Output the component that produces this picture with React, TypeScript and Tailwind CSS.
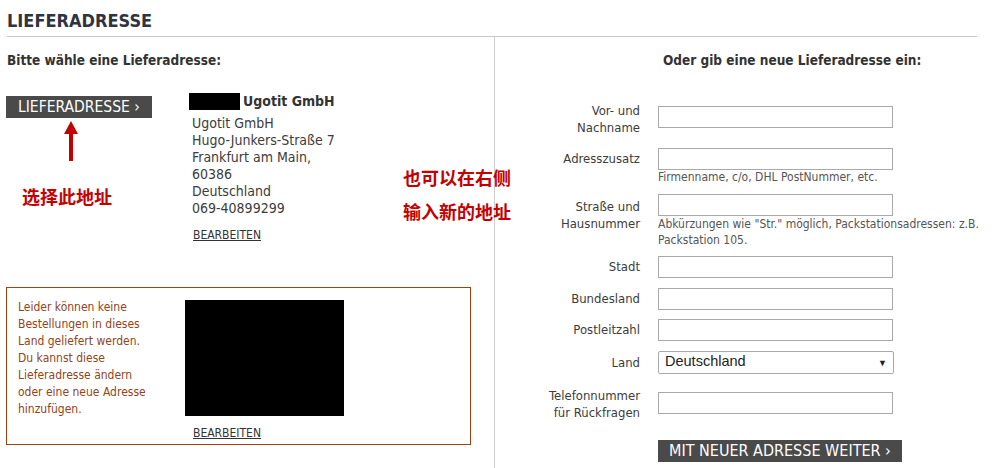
const font = "font-['DejaVu_Sans_Condensed','DejaVu_Sans',sans-serif]";
const cjk = "font-['Noto_Sans_CJK_SC',sans-serif]";

const Input = ({ top = 0 }: { top?: number }) => (
  <div className="h-[22px] w-[235px] border border-[#a9a9a9] bg-white" style={{ marginTop: top }} />
);

const Label = ({ children, className = "" }: { children: React.ReactNode; className?: string }) => (
  <div className={`w-[163px] shrink-0 pr-[18px] text-right ${className}`}>{children}</div>
);

const Arrow = () => (
  <svg width="16" height="40" viewBox="0 0 16 40" className="block">
    <path d="M8 0 L15 13 L10 13 L10 40 L6 40 L6 13 L1 13 Z" fill="#c40000" />
  </svg>
);

export default function App() {
  return (
    <div className={`${font} w-[997px] h-[468px] overflow-hidden bg-white text-[13px] text-[#3c3c3c]`}>
      <div className="w-[970px] ml-[7px]">
        {/* header */}
        <h1 className="pt-[11px] pb-[5px] text-[18px] leading-[20px] font-bold text-[#2f3540] border-b border-[#c8c8c8]">
          LIEFERADRESSE
        </h1>

        <div className="flex min-h-[440px]">
          {/* left column */}
          <div className="w-[488px] shrink-0 border-r border-[#cfcfcf]">
            <h2 className="pt-[15px] text-[13.5px] font-bold text-[#333] leading-[17px]">Bitte wähle eine Lieferadresse:</h2>

            <div className="flex h-[194px] mt-[24px]">
              <div className="w-[182px] shrink-0">
                <button className="mt-[3px] -ml-[1px] h-[22px] px-[12px] bg-[#4a4a4a] text-white text-[15.5px] leading-[22px]">
                  LIEFERADRESSE ›
                </button>
                <div className="ml-[56px] mt-[3px]">
                  <Arrow />
                </div>
                <div className={`${cjk} ml-[15px] mt-[23px] text-[18px] font-bold leading-[24px] text-[#c40000] whitespace-nowrap`}>选择此地址</div>
              </div>

              <div className="w-[214px] shrink-0 text-[14px] leading-[17px]">
                <div className="flex items-center">
                  <span className="inline-block w-[51px] h-[17px] bg-black" />
                  <span className="ml-[3px] font-bold text-[#333]">Ugotit GmbH</span>
                </div>
                <div className="ml-[3px] mt-[5px]">
                  <div>Ugotit GmbH</div>
                  <div>Hugo-Junkers-Straße 7</div>
                  <div>Frankfurt am Main,</div>
                  <div>60386</div>
                  <div>Deutschland</div>
                  <div>069-40899299</div>
                  <a className="block mt-[11px] ml-[1px] text-[12px] leading-[15px] underline text-[#333]">BEARBEITEN</a>
                </div>
              </div>

              <div className={`${cjk} relative z-10 mt-[67px] text-[18px] font-bold leading-[34px] text-[#c40000] whitespace-nowrap`}>
                <div>也可以在右侧</div>
                <div>输入新的地址</div>
              </div>
            </div>

            {/* error box */}
            <div className="-ml-[1px] w-[465px] h-[158px] border border-[#a3400c] flex pt-[11px] pl-[11px]">
              <p className="w-[167px] shrink-0 text-[12px] leading-[17px] text-[#93441a] pr-[30px]">
                Leider können keine Bestellungen in dieses Land geliefert werden. Du kannst diese Lieferadresse ändern oder eine neue Adresse hinzufügen.
              </p>
              <div className="pt-[1px]">
                <div className="w-[159px] h-[116px] bg-black" />
                <a className="inline-block mt-[8px] ml-[8px] text-[12px] underline text-[#333]">BEARBEITEN</a>
              </div>
            </div>
          </div>

          {/* right column */}
          <div className="flex-1">
            <h2 className="pt-[15px] pl-[168px] text-[13.5px] font-bold text-[#333] leading-[17px]">Oder gib eine neue Lieferadresse ein:</h2>

            <div className="mt-[33px] flex flex-col">
              <div className="flex items-start">
                <Label className="leading-[17px]">Vor- und<br />Nachname</Label>
                <Input top={4} />
              </div>

              <div className="mt-[12px] flex items-start">
                <Label className="leading-[22px]">Adresszusatz</Label>
                <div>
                  <Input />
                  <div className="text-[12px] leading-[15px] text-[#555]">Firmenname, c/o, DHL PostNummer, etc.</div>
                </div>
              </div>

              <div className="mt-[9px] flex items-start">
                <Label className="pt-[4px] leading-[17px]">Straße und<br />Hausnummer</Label>
                <div>
                  <Input />
                  <div className="w-[330px] text-[12px] leading-[16px] text-[#555]">
                    Abkürzungen wie "Str." möglich, Packstationsadressen: z.B. Packstation 105.
                  </div>
                </div>
              </div>

              <div className="mt-[8px] flex flex-col gap-[9.5px]">
                {["Stadt", "Bundesland", "Postleitzahl"].map((l) => (
                  <div key={l} className="flex items-center">
                    <Label className="leading-[22px]">{l}</Label>
                    <Input />
                  </div>
                ))}
                <div className="flex items-center">
                  <Label className="leading-[23px]">Land</Label>
                  <div className="relative h-[23px] w-[236px] border border-[#a9a9a9] rounded-[2px] flex items-center px-[6px] text-[14.5px] text-[#222] font-['Liberation_Sans',sans-serif]">
                    Deutschland
                    <span className="absolute right-[6px] top-[5px] text-[9px] text-[#222]">▼</span>
                  </div>
                </div>
              </div>

              <div className="mt-[13px] flex items-start">
                <Label className="leading-[17px]">Telefonnummer<br />für Rückfragen</Label>
                <Input top={5} />
              </div>

              <div className="pl-[163px] mt-[19px]">
                <button className="h-[22px] px-[11px] bg-[#4a4a4a] text-white text-[16px] leading-[22px]">
                  MIT NEUER ADRESSE WEITER ›
                </button>
              </div>
            </div>
          </div>
        </div>
      </div>
    </div>
  );
}
